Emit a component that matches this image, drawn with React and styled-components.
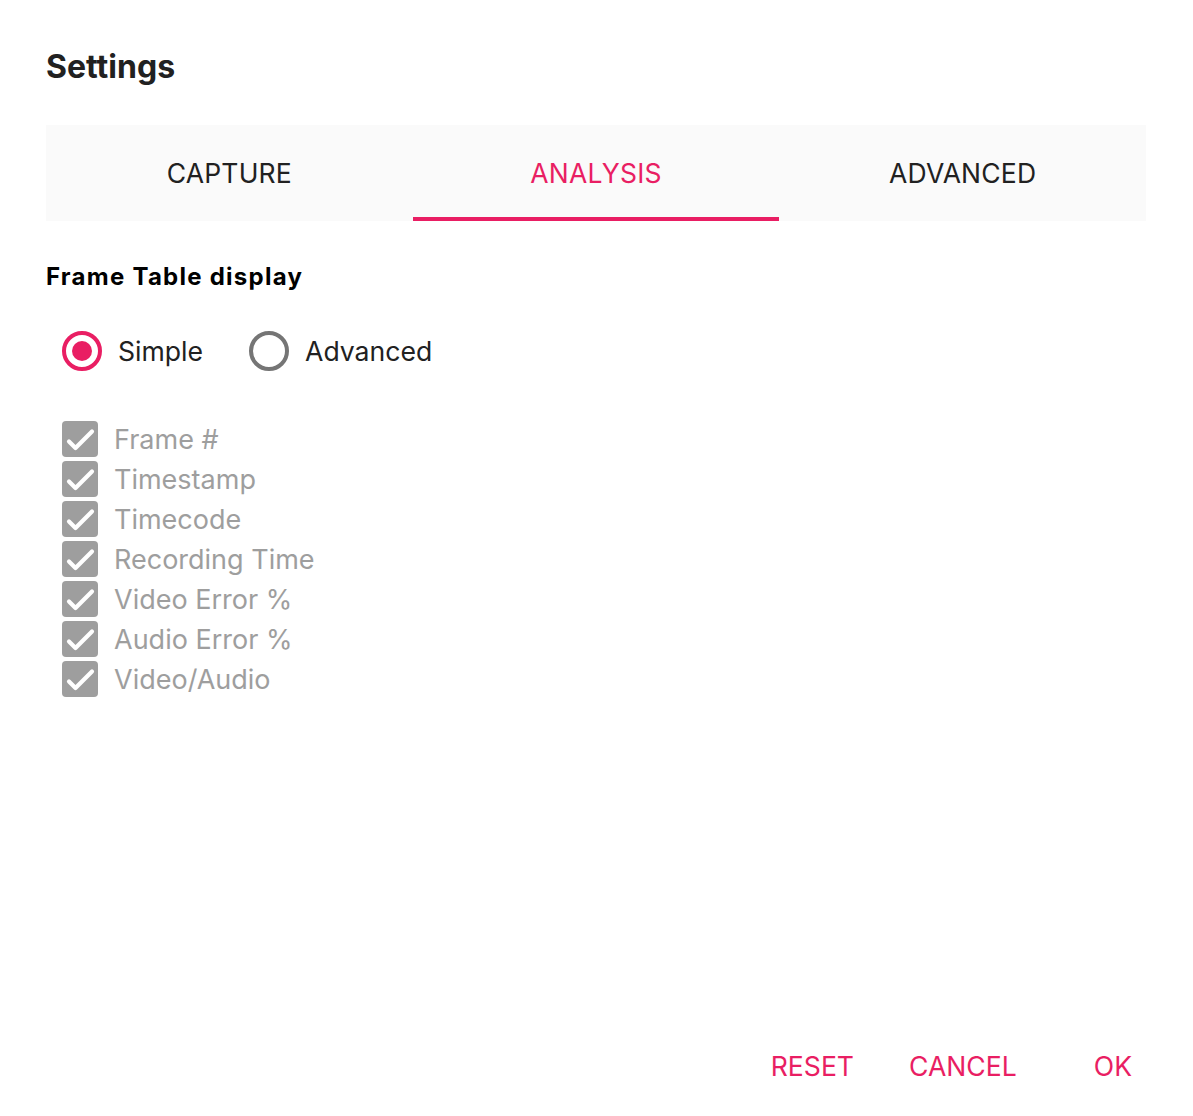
import React, { useState } from 'react'
import styled, { createGlobalStyle } from 'styled-components'

const PINK = '#e91e63'

const GlobalStyle = createGlobalStyle`
  body {
    margin: 0;
    background: #fff;
    font-family: Inter, "Noto Sans", sans-serif;
    color: #212121;
  }
`

const Dialog = styled.div`
  width: 1193px;
  height: 1116px;
  box-sizing: border-box;
  padding: 46px 47px 0 46px;
  display: flex;
  flex-direction: column;
`
const Title = styled.h1`
  margin: 0;
  font-size: 32px;
  font-weight: 700;
  line-height: 42px;
  color: #212121;
`
const TabBar = styled.div`
  margin-top: 37px;
  display: flex;
  background: #fafafa;
  height: 96px;
`
const Tab = styled.button`
  flex: 1;
  border: none;
  background: transparent;
  font-family: inherit;
  font-size: 26.5px;
  letter-spacing: 0.2px;
  color: ${p => (p.$active ? PINK : '#212121')};
  border-bottom: 4px solid ${p => (p.$active ? PINK : 'transparent')};
  padding: 4px 0 0;
  cursor: pointer;
`
const Section = styled.div`
  padding-top: 40px;
  flex: 1;
`
const Heading = styled.h2`
  margin: 0;
  font-size: 24px;
  font-weight: 700;
  letter-spacing: 1.25px;
  line-height: 32px;
  color: #000;
`
const RadioRow = styled.div`
  display: flex;
  gap: 46px;
  margin-top: 38px;
  padding-left: 16px;
`
const RadioLabel = styled.label`
  display: flex;
  align-items: center;
  gap: 16px;
  font-size: 26.6px;
  color: #212121;
  cursor: pointer;
`
const RadioCircle = styled.span`
  width: 40px;
  height: 40px;
  box-sizing: border-box;
  border-radius: 50%;
  border: 4px solid ${p => (p.$checked ? PINK : '#757575')};
  display: flex;
  align-items: center;
  justify-content: center;
  &::after {
    content: '';
    width: 20px;
    height: 20px;
    border-radius: 50%;
    background: ${p => (p.$checked ? PINK : 'transparent')};
  }
`
const CheckList = styled.div`
  margin-top: 48px;
  padding-left: 16px;
  display: flex;
  flex-direction: column;
`
const CheckRow = styled.div`
  display: flex;
  align-items: center;
  gap: 16px;
  height: 40px;
  font-size: 27px;
  color: #9e9e9e;
`
const Box = styled.span`
  width: 36px;
  height: 36px;
  border-radius: 4px;
  background: #9e9e9e;
  display: flex;
`
const Footer = styled.div`
  display: flex;
  justify-content: flex-end;
  padding: 0 14px 26px 0;
`
const FooterButton = styled.button`
  border: none;
  background: transparent;
  font-family: inherit;
  font-size: 26.6px;
  color: ${PINK};
  padding: 8px 0;
  margin-left: ${p => p.$gap || 0}px;
  cursor: pointer;
`

const columns = [
  'Frame #',
  'Timestamp',
  'Timecode',
  'Recording Time',
  'Video Error %',
  'Audio Error %',
  'Video/Audio',
]

const Check = () => (
  <svg width="36" height="36" viewBox="0 0 36 36">
    <path d="M7 20.5l6.5 6.5L30 10.5" fill="none" stroke="#fff" strokeWidth="4.2" strokeLinecap="round" strokeLinejoin="round" />
  </svg>
)

const App = () => {
  const [tab, setTab] = useState(1)
  const [mode, setMode] = useState('simple')

  return (
    <Dialog>
      <GlobalStyle />
      <Title>Settings</Title>
      <TabBar>
        {['CAPTURE', 'ANALYSIS', 'ADVANCED'].map((t, i) => (
          <Tab key={t} $active={tab === i} onClick={() => setTab(i)}>{t}</Tab>
        ))}
      </TabBar>
      <Section>
        <Heading>Frame Table display</Heading>
        <RadioRow>
          <RadioLabel onClick={() => setMode('simple')}>
            <RadioCircle $checked={mode === 'simple'} />
            Simple
          </RadioLabel>
          <RadioLabel onClick={() => setMode('advanced')}>
            <RadioCircle $checked={mode === 'advanced'} />
            Advanced
          </RadioLabel>
        </RadioRow>
        <CheckList>
          {columns.map(c => (
            <CheckRow key={c}>
              <Box><Check /></Box>
              {c}
            </CheckRow>
          ))}
        </CheckList>
      </Section>
      <Footer>
        <FooterButton>RESET</FooterButton>
        <FooterButton $gap={55}>CANCEL</FooterButton>
        <FooterButton $gap={77}>OK</FooterButton>
      </Footer>
    </Dialog>
  )
}

export default App
